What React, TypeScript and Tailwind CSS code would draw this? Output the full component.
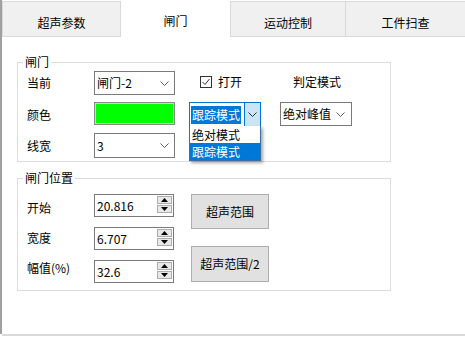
import React from 'react';

// Windows-style "闸门" settings tab page

function Chevron({ color = '#606060' }: { color?: string }) {
  return (
    <svg width="9" height="5" viewBox="0 0 9 5" className="shrink-0">
      <path d="M0.5 0.5 L4.5 4.5 L8.5 0.5" stroke={color} strokeWidth="1" fill="none" />
    </svg>
  );
}

function Combo({ value, className = '' }: { value: string; className?: string }) {
  return (
    <div
      className={`flex items-center justify-between border border-[#7a7a7a] bg-white pl-[2px] pr-[5px] ${className}`}
    >
      <span>{value}</span>
      <Chevron />
    </div>
  );
}

function Arrow({ up }: { up?: boolean }) {
  return (
    <svg width="7" height="4" viewBox="0 0 7 4">
      <path d={up ? 'M3.5 0 L7 4 L0 4Z' : 'M0 0 L7 0 L3.5 4Z'} fill="#000" />
    </svg>
  );
}

function Spinner({ value }: { value: string }) {
  return (
    <div className="flex h-[23px] w-[80px] border border-[#7a7a7a] bg-white">
      <span className="flex-1 self-center pl-[2px]">{value}</span>
      <div className="mr-[1px] mt-[1px] flex w-[15px] flex-col gap-[1px]">
        <div className="flex h-[8px] items-center justify-center border border-[#adadad] bg-[#e8e8e8]">
          <Arrow up />
        </div>
        <div className="flex h-[8px] items-center justify-center border border-[#adadad] bg-[#e8e8e8]">
          <Arrow />
        </div>
      </div>
    </div>
  );
}

function Tab({ label, selected, className = '' }: { label: string; selected?: boolean; className?: string }) {
  if (selected) {
    return (
      <div className={`h-[37px] bg-white pt-[13px] text-center ${className}`}>{label}</div>
    );
  }
  return (
    <div
      className={`h-[36px] border-y border-[#d9d9d9] bg-[#f0f0f0] pt-[13px] text-center ${className}`}
    >
      {label}
    </div>
  );
}

export default function App() {
  return (
    <div className="h-[338px] w-[465px] overflow-hidden bg-white font-['Noto_Sans_CJK_SC','Microsoft_YaHei',sans-serif] text-[12px] leading-[16px] text-black">
      <div className="flex items-start">
        <div className="h-[334px] w-[2px] bg-[#a0a0a0]" />
        <div className="flex h-[336px] flex-1 flex-col border-b-2 border-[#dadada]">
          {/* Tabs */}
          <div className="flex h-[37px] items-end">
            <Tab label="超声参数" className="w-[119px] border-x" />
            <Tab label="闸门" selected className="w-[109px]" />
            <Tab label="运动控制" className="w-[115px] border-l" />
            <Tab label="工件扫查" className="w-[120px] border-l" />
          </div>

          {/* Page */}
          <div className="flex-1 pl-[15px] pt-[17px]">
            <fieldset className="w-[374px] border border-[#dcdcdc] pb-[3px]">
              <legend className="ml-[5px] px-[2px]">闸门</legend>
              <div className="pl-[9px]">
                <div className="mt-[1px] flex h-[24px] items-center">
                  <span className="w-[67px]">当前</span>
                  <Combo value="闸门-2" className="h-[24px] w-[81px]" />
                  <div className="mb-[3px] ml-[25px] flex items-center">
                    <div className="flex h-[12px] w-[12px] items-center justify-center border border-[#333333] bg-white">
                      <svg width="10" height="10" viewBox="0 0 10 10">
                        <path d="M1.5 5 L4 7.5 L8.5 2" stroke="#333" strokeWidth="1" fill="none" />
                      </svg>
                    </div>
                    <span className="ml-[6px]">打开</span>
                    <span className="ml-[51px]">判定模式</span>
                  </div>
                </div>

                <div className="mt-[7px] flex h-[25px] items-start">
                  <span className="w-[67px] self-center">颜色</span>
                  <div className="h-[23px] w-[81px] border border-[#8a8a8a] bg-[#d4d4d4] p-[1px]">
                    <div className="h-full w-full bg-[#00ff00]" />
                  </div>
                  <div className="relative ml-[14px] flex h-[25px] w-[72px] border border-[#0078d7] bg-white">
                    <div className="flex flex-1 items-center p-[1px]">
                      <span className="flex h-[18px] items-center bg-[#0078d7] px-[1px] text-white">跟踪模式</span>
                    </div>
                    <div className="flex w-[16px] items-center justify-center border-l border-[#0078d7] bg-[#cce4f7]">
                      <Chevron color="#333333" />
                    </div>
                    <div className="absolute left-[-1px] top-full z-10 w-[72px] border border-t-0 border-[#3c6ea5] bg-white shadow-[2px_2px_3px_rgba(0,0,0,0.35)]">
                      <div className="flex h-[17px] items-center pl-[2px]">绝对模式</div>
                      <div className="flex h-[17px] items-center bg-[#0078d7] pl-[2px] text-white">跟踪模式</div>
                    </div>
                  </div>
                  <Combo value="绝对峰值" className="ml-[19px] h-[24px] w-[72px] pr-[6px]" />
                </div>

                <div className="mt-[6px] flex h-[25px] items-center">
                  <span className="w-[67px]">线宽</span>
                  <Combo value="3" className="h-[25px] w-[81px]" />
                </div>
              </div>
            </fieldset>

            <fieldset className="mt-[8px] w-[374px] border border-[#dcdcdc] pb-[7px]">
              <legend className="ml-[5px] px-[2px]">闸门位置</legend>
              <div className="flex items-start pl-[9px]">
                <div className="mt-[14px] flex w-[67px] flex-col gap-[14px]">
                  <span>开始</span>
                  <span>宽度</span>
                  <span>幅值(%)</span>
                </div>
                <div className="mt-[8px] flex flex-col gap-[10px]">
                  <Spinner value="20.816" />
                  <Spinner value="6.707" />
                  <Spinner value="32.6" />
                </div>
                <div className="ml-[17px] mt-[8px] flex flex-col">
                  <button className="flex h-[35px] w-[78px] items-center justify-center border border-[#adadad] bg-[#e1e1e1]">
                    超声范围
                  </button>
                  <button className="mt-[17px] flex h-[36px] w-[78px] items-center justify-center border border-[#adadad] bg-[#e1e1e1]">
                    超声范围/2
                  </button>
                </div>
              </div>
            </fieldset>
          </div>
        </div>
      </div>
    </div>
  );
}
